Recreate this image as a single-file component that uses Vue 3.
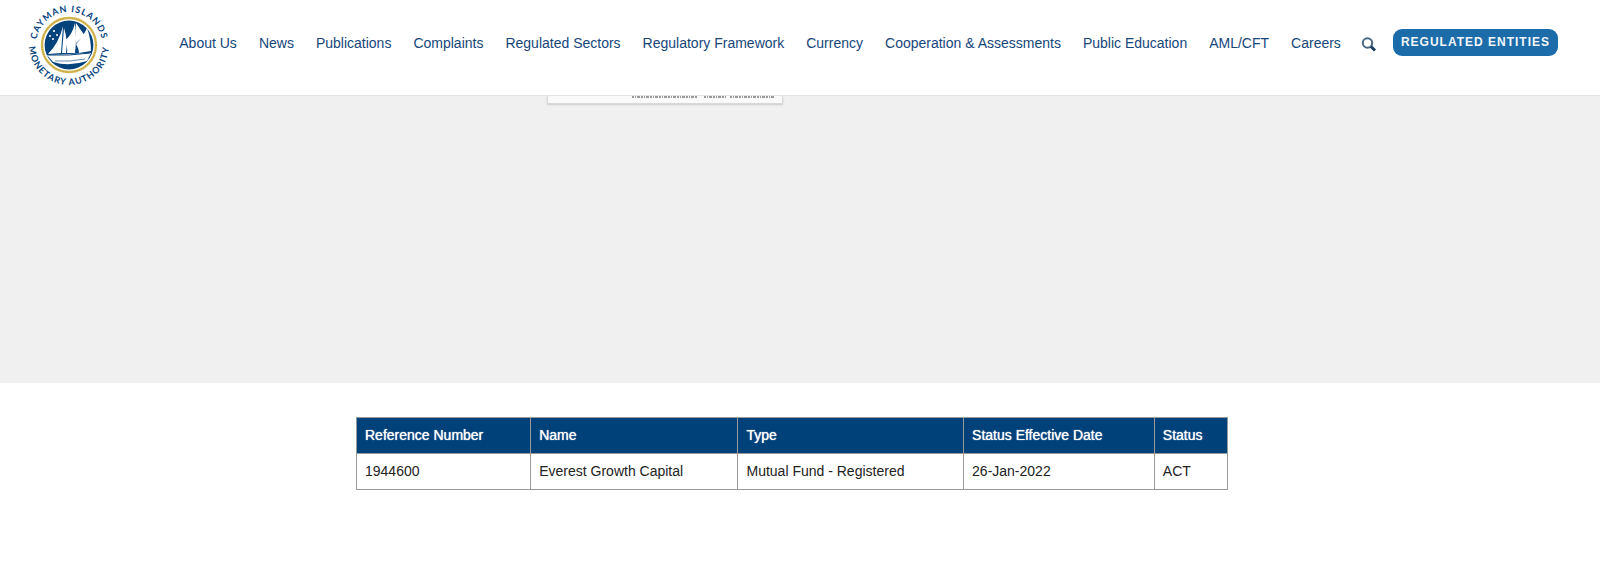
<template>
  <div class="page">
    <header class="site-header">
      <a class="logo" href="#" aria-label="Cayman Islands Monetary Authority">
        <svg width="84" height="84" viewBox="-42 -42 84 84">
          <defs>
            <path id="arc-top" d="M-33 0A33 33 0 0 1 33 0" />
            <path id="arc-bottom" d="M-39.8 -4A40 40 0 1 0 39.8 -4" />
          </defs>
          <circle r="27" fill="#fff" stroke="#d9bd58" stroke-width="2.4" />
          <circle r="27" fill="none" stroke="#b08f2a" stroke-width="1" stroke-dasharray="1 1.4" />
          <circle r="24.4" fill="#04427c" />
          <g fill="#fff">
            <path d="M-6 -19Q-10 -2 -21 9L-8 8Q-7 -6 -6 -19Z" />
            <path d="M-5 -17Q-1 -5 -3 8L-7 8Z" />
            <path d="M6 -22Q3 -9 -5 -4Q-1 1 -2 8L6 8Q8 -8 6 -22Z" />
            <path d="M7 -22L16 -9Q11 -6 7 -2Z" />
            <path d="M18 -17Q14 -8 7 -1Q10 4 10 8L22 6Q22 -6 18 -17Z" />
            <path d="M-22 10L22 8L18 16Q0 22 -16 17Z" />
            <circle cx="-15" cy="-14" r="1.1" />
            <circle cx="-19" cy="-9" r="1" />
            <circle cx="-12" cy="-10" r="1" />
            <circle cx="-16" cy="-6" r="1" />
          </g>
          <g fill="none" stroke="#04427c">
            <path d="M-21 10Q0 11 21 8" stroke-width="1" />
            <path d="M-14 16Q0 17 16 14" stroke-width="0.6" />
          </g>
          <g class="logo-text">
            <text><textPath href="#arc-top" startOffset="50%">CAYMAN ISLANDS</textPath></text>
            <text><textPath href="#arc-bottom" startOffset="50%">MONETARY AUTHORITY</textPath></text>
          </g>
        </svg>
      </a>
      <nav class="main-nav">
        <a v-for="item in navItems" :key="item" href="#">{{ item }}</a>
        <button class="search" type="button" aria-label="Search">
          <svg width="16" height="16" viewBox="0 0 16 16" fill="none">
            <circle cx="6.5" cy="6" r="4.7" stroke="#4b6880" stroke-width="2" />
            <path d="M10 9.5L14 13.5" stroke="#1c3e5e" stroke-width="3" />
          </svg>
        </button>
        <a class="entities" href="#">REGULATED ENTITIES</a>
      </nav>
    </header>

    <section class="banner">
      <div class="widget">
        <svg width="144" height="3" viewBox="0 0 144 3" aria-hidden="true">
          <path d="M0 1H65M72 1H95M98 1H142" stroke="#999" stroke-width="2" stroke-dasharray="2 1 1 1 3 1" />
        </svg>
      </div>
    </section>

    <main class="results">
      <table>
        <colgroup>
          <col v-for="col in columns" :key="col.key" :style="{ width: col.width + '%' }">
        </colgroup>
        <thead>
          <tr>
            <th v-for="col in columns" :key="col.key" scope="col">{{ col.label }}</th>
          </tr>
        </thead>
        <tbody>
          <tr v-for="row in rows" :key="row.reference">
            <td v-for="col in columns" :key="col.key">{{ row[col.key] }}</td>
          </tr>
        </tbody>
      </table>
    </main>
  </div>
</template>

<script setup>
import { ref } from 'vue';

const navItems = [
  "About Us",
  "News",
  "Publications",
  "Complaints",
  "Regulated Sectors",
  "Regulatory Framework",
  "Currency",
  "Cooperation & Assessments",
  "Public Education",
  "AML/CFT",
  "Careers",
];

const columns = [
  { key: "reference", label: "Reference Number", width: 20 },
  { key: "name", label: "Name", width: 23.8 },
  { key: "type", label: "Type", width: 25.9 },
  { key: "date", label: "Status Effective Date", width: 21.9 },
  { key: "status", label: "Status", width: 8.4 },
];

const rows = ref([
  {
    reference: "1944600",
    name: "Everest Growth Capital",
    type: "Mutual Fund - Registered",
    date: "26-Jan-2022",
    status: "ACT",
  },
]);
</script>

<style>
body {
  margin: 0;
  background-color: #fff;
}
</style>

<style scoped>
.page {
  font-family: "Liberation Sans", Arial, sans-serif;
  font-size: 14px;
  line-height: 19px;
  color: #222;
}

.site-header {
  display: flex;
  justify-content: space-between;
  box-sizing: border-box;
  padding: 3px 42px 8px 27px;
  border-bottom: 1px solid #e4e4e4;
}

.logo svg {
  display: block;
}

.logo-text {
  fill: #04427c;
  font-family: Lato, sans-serif;
  font-size: 8px;
  font-weight: 700;
  letter-spacing: 1px;
  text-anchor: middle;
}

.logo-text text {
  font-size: 9px;
}

.main-nav {
  display: flex;
  align-items: flex-start;
  gap: 22px;
  padding-top: 26px;
  white-space: nowrap;
}

.main-nav a {
  padding-top: 5px;
  color: #16467a;
  text-decoration: none;
}

.search {
  margin: 8px -6px 0 -2px;
  padding: 0;
  border: 0;
  background: none;
}

.search svg {
  display: block;
}

.main-nav .entities {
  padding: 4px 8px;
  border-radius: 9px;
  background-color: #1b6ca8;
  color: #f2f6fa;
  font-size: 12px;
  font-weight: 700;
  letter-spacing: 1px;
}

.banner {
  height: 287px;
  background-color: #f0f0f0;
}

.widget {
  box-sizing: border-box;
  width: 236px;
  height: 8px;
  margin-left: 547px;
  padding-left: 84px;
  border: 1px solid #d8d8d8;
  border-top: 0;
  background-color: #fafafa;
  box-shadow: 0 1px 2px #ccc;
}

.widget svg {
  display: block;
}

.results {
  padding: 34px 372px 34px 356px;
}

table {
  width: 100%;
  table-layout: fixed;
  border-collapse: collapse;
}

th,
td {
  padding: 8px;
  border: 1px solid #999;
  text-align: left;
}

th {
  background-color: #00417a;
  color: #fff;
  font-weight: 400;
  text-shadow: 0 0 1px #fff;
}
</style>
